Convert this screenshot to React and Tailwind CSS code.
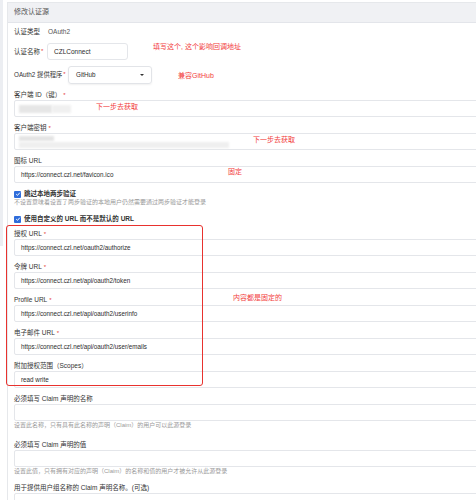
const font = "font-['Liberation_Sans','Noto_Sans_CJK_SC',sans-serif]";

function Label({ children, required }) {
  return (
    <div className="h-[8px] leading-[8px] text-[6.5px] text-[#333] whitespace-nowrap">
      {children}
      {required && <span className="ml-[2px] text-[#e53935] align-top text-[6px]">*</span>}
    </div>
  );
}

function Input({ value, children }) {
  return (
    <div className="relative mt-[1px] h-[17px] w-[480px] rounded-[2px] border border-[#e4e6ea] bg-white px-[6px] flex items-center text-[6.3px] text-[#2b2b2b]">
      {value}
      {children}
    </div>
  );
}

function Field({ label, required, value, desc, children }) {
  return (
    <div className="mb-[7px]">
      <Label required={required}>{label}</Label>
      <Input value={value}>{children}</Input>
      {desc && (
        <div className="h-[8px] leading-[8px] text-[6px] text-[#9a9a9a] whitespace-nowrap -mb-[1px]">{desc}</div>
      )}
    </div>
  );
}

function Check({ label }) {
  return (
    <div className="flex items-center gap-[3px] h-[8px]">
      <span className="flex h-[7px] w-[7px] items-center justify-center rounded-[1px] bg-[#2f6ddb]">
        <svg viewBox="0 0 10 10" className="h-[6px] w-[6px]">
          <path d="M2 5.2 4.2 7.3 8 2.8" fill="none" stroke="#fff" strokeWidth="1.6" />
        </svg>
      </span>
      <span className="text-[6.5px] font-bold text-[#333] whitespace-nowrap">{label}</span>
    </div>
  );
}

function Note({ left, top, children }) {
  return (
    <div className="absolute text-[7px] leading-[10px] text-[#f23c3c] whitespace-nowrap" style={{ left, top }}>
      {children}
    </div>
  );
}

export default function App() {
  return (
    <div className={`relative flex h-[500px] w-[476px] overflow-hidden bg-white ${font}`}>
      <div className="h-[246px] w-[3px] shrink-0 bg-[#eceef2]" />
      <div className="ml-[4px] mt-[2px] w-[500px] shrink-0 border-l border-t border-[#e6e8eb]">
        <div className="flex h-[20px] items-center border-b border-[#e3e5ea] bg-[#f0f1f4] px-[6px] text-[7px] text-[#555]">
          修改认证源
        </div>
        <div className="px-[6px] pt-[5px]">
          <div className="flex h-[8px] items-center gap-[8px] text-[6.5px] text-[#333]">
            <span>认证类型</span>
            <span className="text-[#555]">OAuth2</span>
          </div>

          <div className="mt-[7px] flex items-center">
            <div className="w-[33px] text-[6.5px] text-[#333] whitespace-nowrap">
              认证名称<span className="ml-[1px] text-[#e53935] text-[6px] align-top">*</span>
            </div>
            <div className="flex h-[17px] w-[81px] items-center rounded-[3px] border border-[#e4e6ea] px-[6px] text-[6.5px] text-[#2b2b2b]">
              CZLConnect
            </div>
          </div>

          <div className="mt-[6px] mb-[7px] flex items-center">
            <div className="w-[54px] text-[6.3px] text-[#333] whitespace-nowrap">
              OAuth2 提供程序<span className="ml-[1px] text-[#e53935] text-[6px] align-top">*</span>
            </div>
            <div className="flex h-[18px] w-[84px] items-center justify-between rounded-[3px] border border-[#e2e4e8] px-[7px] text-[6.3px] text-[#2b2b2b] shadow-[0_1px_2px_rgba(0,0,0,0.06)]">
              GitHub
              <span className="h-0 w-0 border-x-[2px] border-t-[2px] border-x-transparent border-t-[#333]" />
            </div>
          </div>

          <Field label="客户端 ID（键）" required>
            <div className="absolute left-[4px] top-[4px] h-[8px] w-[33px] bg-[#e6e6e6] blur-[1px]" />
            <div className="absolute left-[37px] top-[4px] h-[8px] w-[19px] bg-[#f0f0f0] blur-[1px]" />
          </Field>
          <Field label="客户端密钥" required>
            <div className="absolute left-[4px] top-[2px] h-[5px] w-[35px] bg-[#e4e4e4] blur-[1px]" />
            <div className="absolute left-[4px] top-[8px] h-[6px] w-[210px] bg-[#efefef] blur-[1px]" />
          </Field>
          <Field label="图标 URL" value="https://connect.czl.net/favicon.ico" />

          <div className="mt-[1px]">
            <Check label="跳过本地两步验证" />
            <div className="h-[8px] leading-[8px] text-[6px] text-[#9a9a9a] whitespace-nowrap">
              不设置意味着设置了两步验证的本地用户仍然需要通过两步验证才能登录
            </div>
          </div>
          <div className="mt-[9px] mb-[7px]">
            <Check label="使用自定义的 URL 而不是默认的 URL" />
          </div>

          <Field label="授权 URL" required value="https://connect.czl.net/oauth2/authorize" />
          <Field label="令牌 URL" required value="https://connect.czl.net/api/oauth2/token" />
          <Field label="Profile URL" required value="https://connect.czl.net/api/oauth2/userinfo" />
          <Field label="电子邮件 URL" required value="https://connect.czl.net/api/oauth2/user/emails" />
          <Field label="附加授权范围（Scopes）" value="read write" />
          <Field
            label="必须填写 Claim 声明的名称"
            desc="设置此名称，只有具有此名称的声明（Claim）的用户可以此源登录"
          />
          <div className="h-[6px]" />
          <Field
            label="必须填写 Claim 声明的值"
            desc="设置此值，只有拥有对应的声明（Claim）的名称和值的用户才被允许从此源登录"
          />
          <div className="h-[3px]" />
          <Field label="用于提供用户组名称的 Claim 声明名称。(可选)" />
        </div>
      </div>

      <div className="absolute left-[6px] top-[225px] h-[161px] w-[197px] rounded-[3px] border-[1.5px] border-[#e8322e]" />

      <Note left={153} top={42}>填写这个, 这个影响回调地址</Note>
      <Note left={178} top={71}>兼容GitHub</Note>
      <Note left={96} top={102}>下一步去获取</Note>
      <Note left={253} top={135}>下一步去获取</Note>
      <Note left={228} top={167}>固定</Note>
      <Note left={233} top={293}>内容都是固定的</Note>
    </div>
  );
}
